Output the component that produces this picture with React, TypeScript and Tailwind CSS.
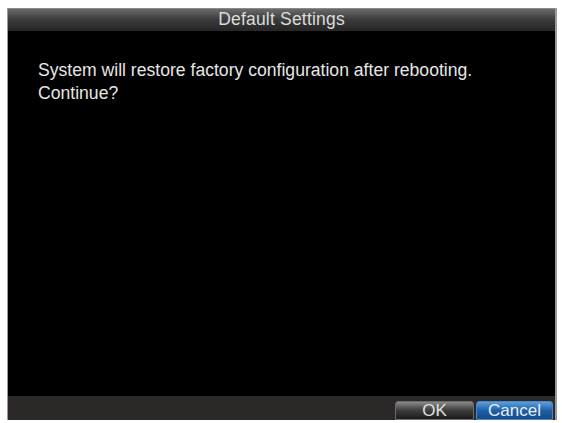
import React from "react";

const App: React.FC = () => {
  return (
    <div className="w-[562px] h-[423px] bg-white pt-[8px] pl-[7px]" style={{ fontFamily: '"Liberation Sans", Arial, sans-serif' }}>
      <div className="w-[550px] h-[412px] flex flex-col bg-black border-l border-r-2 border-[#9a9a9a]">
        {/* Titel */}
        <div className="h-[23px] flex items-center justify-center bg-gradient-to-b from-[#6a6a6a] via-[#3a3a3a] to-[#262626] border-t border-[#8a8a8a]">
          <span className="text-[17.5px] text-[#dcdcdc] leading-none tracking-[0.2px]">Default Settings</span>
        </div>

        {/* Inhalt */}
        <div className="flex-1 px-[30px] pt-[28px] text-[17.6px] leading-[23px] text-[#e6e6e6]">
          <div>System will restore factory configuration after rebooting.</div>
          <div>Continue?</div>
        </div>

        {/* Fuss */}
        <div className="h-[24px] bg-[#2c2828] flex items-end justify-end gap-[2px] pr-[2px]">
          <button className="w-[79px] h-[19px] rounded-t-[3px] bg-gradient-to-b from-[#8a8a8a] via-[#3c3c3c] to-[#1c1c1c] border border-[#6a6a6a] text-[17px] leading-none text-[#e0e0e0]">
            OK
          </button>
          <button className="w-[77px] h-[19px] rounded-t-[3px] bg-gradient-to-b from-[#5aa0e0] via-[#1f5fa8] to-[#134a8a] border border-[#4a86c8] text-[17px] leading-none text-[#e8eef6]">
            Cancel
          </button>
        </div>
      </div>
    </div>
  );
};

export default App;
